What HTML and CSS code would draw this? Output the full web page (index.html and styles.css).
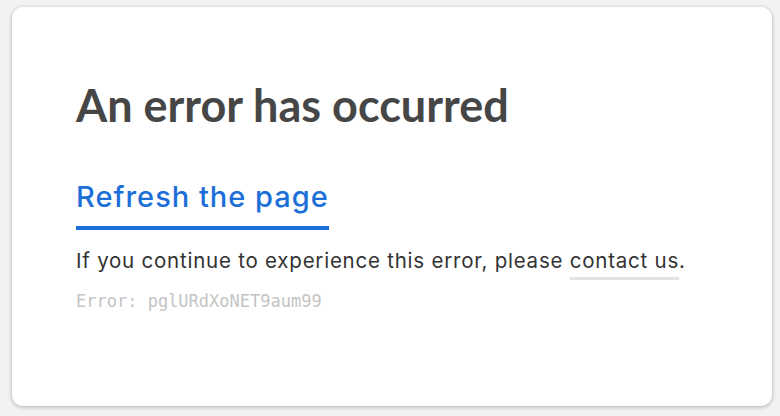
FILE: index.html
```html
<!DOCTYPE html>
<html>
<head>
    <title>Error</title>
    <link rel="stylesheet" href="styles.css">
</head>
<body>
    <div class="card">
        <h1 class="title">An error has occurred</h1>
        <a class="refreshLink" href="#">Refresh the page</a>
        <p class="message">If you continue to experience this error, please <a class="contactLink" href="#">contact us</a>.</p>
        <p class="errorCode">Error: pglURdXoNET9aum99</p>
    </div>
</body>
</html>
```

FILE: styles.css
```css
body {
    margin: 0;
    background-color: #f2f2f2;
    font-family: Inter, "Noto Sans", sans-serif;
}

.card {
    margin: 7px 8px 10px 12px;
    height: 399px;
    box-sizing: border-box;
    padding: 72px 64px 0 64px;
    background-color: #ffffff;
    border-radius: 11px;
    box-shadow: 0 1px 4px rgba(0, 0, 0, 0.28);
}

.title {
    margin: 0 0 49px 0;
    font-family: Lato, sans-serif;
    font-size: 45px;
    font-weight: 700;
    color: #464646;
    line-height: 52px;
}

.refreshLink {
    display: inline-block;
    font-size: 29px;
    font-weight: 500;
    letter-spacing: 1px;
    line-height: 34px;
    color: #1c6fd8;
    text-decoration: none;
    padding-bottom: 12px;
    border-bottom: 4px solid #1c6fd8;
}

.message {
    margin: 17px 0 0 0;
    font-size: 20.5px;
    letter-spacing: 0.77px;
    line-height: 28px;
    color: #333333;
}

.contactLink {
    color: #333333;
    text-decoration: none;
    padding-bottom: 4px;
    border-bottom: 3px solid #e4e4e4;
}

.errorCode {
    margin: 14px 0 0 0;
    font-family: "DejaVu Sans Mono", monospace;
    font-size: 17px;
    line-height: 24px;
    color: #c4c4c4;
}
```
